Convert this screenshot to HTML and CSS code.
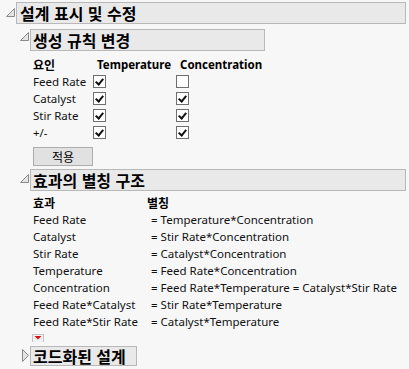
FILE: index.html
```html
<!DOCTYPE html>
<html lang="ko">
<head>
    <meta charset="UTF-8">
    <title>설계 표시 및 수정</title>
    <link rel="stylesheet" href="styles.css">
</head>
<body>
    <div class="outline">
        <div class="outline-head">
            <svg class="disclose" width="16" height="22" viewBox="0 0 16 22"><polygon points="6.5,16.5 14.5,16.5 14.5,8.5" fill="#e4e4e4" stroke="#8a8a8a"/></svg>
            <div class="title-box title-main">설계 표시 및 수정</div>
        </div>
        <div class="outline-body">
            <div class="outline">
                <div class="outline-head">
                    <svg class="disclose" width="16" height="22" viewBox="0 0 16 22"><polygon points="6.5,16.5 14.5,16.5 14.5,8.5" fill="#e4e4e4" stroke="#8a8a8a"/></svg>
                    <div class="title-box title-gen">생성 규칙 변경</div>
                </div>
                <div class="sub-body">
                    <div class="gen-table">
                        <div class="th">요인</div>
                        <div class="th th-check">Temperature</div>
                        <div class="th th-check">Concentration</div>

                        <div class="td">Feed Rate</div>
                        <div class="td"><span class="check on"></span></div>
                        <div class="td"><span class="check"></span></div>

                        <div class="td">Catalyst</div>
                        <div class="td"><span class="check on"></span></div>
                        <div class="td"><span class="check on"></span></div>

                        <div class="td">Stir Rate</div>
                        <div class="td"><span class="check on"></span></div>
                        <div class="td"><span class="check on"></span></div>

                        <div class="td">+/-</div>
                        <div class="td"><span class="check on"></span></div>
                        <div class="td"><span class="check on"></span></div>
                    </div>
                    <button class="apply">적용</button>
                </div>
            </div>

            <div class="outline">
                <div class="outline-head">
                    <svg class="disclose" width="16" height="22" viewBox="0 0 16 22"><polygon points="6.5,16.5 14.5,16.5 14.5,8.5" fill="#e4e4e4" stroke="#8a8a8a"/></svg>
                    <div class="title-box title-alias">효과의 별칭 구조</div>
                </div>
                <div class="sub-body">
                    <div class="alias-table">
                        <div class="th">효과</div>
                        <div class="th">별칭</div>
                        <div class="td">Feed Rate</div>
                        <div class="td alias">= Temperature*Concentration</div>
                        <div class="td">Catalyst</div>
                        <div class="td alias">= Stir Rate*Concentration</div>
                        <div class="td">Stir Rate</div>
                        <div class="td alias">= Catalyst*Concentration</div>
                        <div class="td">Temperature</div>
                        <div class="td alias">= Feed Rate*Concentration</div>
                        <div class="td">Concentration</div>
                        <div class="td alias">= Feed Rate*Temperature = Catalyst*Stir Rate</div>
                        <div class="td">Feed Rate*Catalyst</div>
                        <div class="td alias">= Stir Rate*Temperature</div>
                        <div class="td">Feed Rate*Stir Rate</div>
                        <div class="td alias">= Catalyst*Temperature</div>
                    </div>
                </div>
            </div>

            <div class="red-menu">
                <svg width="12" height="8" viewBox="0 0 12 8"><polygon points="2.5,2 9.5,2 6,5.5" fill="#d61010"/></svg>
            </div>

            <div class="outline">
                <div class="outline-head">
                    <svg class="disclose" width="16" height="20" viewBox="0 0 16 20"><polygon points="8.5,3.5 14.5,9.5 8.5,15.5" fill="#e4e4e4" stroke="#8a8a8a"/></svg>
                    <div class="title-box title-coded">코드화된 설계</div>
                </div>
            </div>
        </div>
    </div>
</body>
</html>
```

FILE: styles.css
```css
body {
    margin: 0;
    background-color: #f7f7f7;
    color: #111;
    font-family: "Noto Sans", "Noto Sans CJK KR", sans-serif;
    font-size: 11.5px;
    width: 409px;
    height: 369px;
    overflow: hidden;
}
.outline-head {
    display: flex;
    align-items: flex-start;
}
.disclose {
    flex: none;
    display: block;
}
.title-box {
    box-sizing: border-box;
    height: 22px;
    line-height: 20px;
    background-color: #e9e9e9;
    border: 1px solid #b8b8b8;
    padding-left: 3px;
    font-family: "Noto Sans CJK KR", sans-serif;
    font-size: 16px;
    font-weight: 700;
    color: #000;
    white-space: nowrap;
}
.title-main {
    margin-top: 2px;
    flex: 1;
    margin-right: 3px;
}
.outline-body {
    margin-left: 14px;
}
.title-gen {
    margin-top: 5px;
    width: 235px;
    padding-left: 2px;
}
.title-alias {
    flex: 1;
    margin-right: 3px;
    padding-left: 2px;
}
.title-coded {
    width: 107px;
    height: 20px;
    line-height: 18px;
    padding-left: 2px;
}
.sub-body {
    margin-left: 19px;
}
.th {
    font-family: "Noto Sans CJK KR", sans-serif;
    font-weight: 700;
    font-size: 12px;
    color: #000;
    height: 17px;
    line-height: 17px;
}
.td {
    height: 17px;
    line-height: 17px;
    display: flex;
    align-items: center;
    white-space: nowrap;
}
.gen-table {
    margin-top: 5px;
    display: grid;
    grid-template-columns: 60px 83px 1fr;
}
.th-check {
    padding-left: 4px;
    font-family: "Noto Sans", sans-serif;
    font-size: 11.5px;
}
.check {
    box-sizing: border-box;
    width: 13px;
    height: 13px;
    background-color: #fff;
    border: 1px solid #6f6f6f;
    position: relative;
}
.check.on::after {
    content: "";
    position: absolute;
    left: 3px;
    top: 1px;
    width: 3px;
    height: 6px;
    border-right: 2px solid #111;
    border-bottom: 2px solid #111;
    transform: rotate(40deg);
}
.apply {
    display: block;
    margin-top: 6px;
    width: 60px;
    height: 19px;
    padding: 0;
    background-color: #e1e1e1;
    border: 1px solid #adadad;
    font-family: "Noto Sans CJK KR", sans-serif;
    font-size: 12px;
    color: #000;
    line-height: 16px;
}
.outline + .outline .title-alias {
    margin-top: 3px;
}
.alias-table {
    margin-top: 3px;
    display: grid;
    grid-template-columns: 114px 1fr;
}
.alias {
    padding-left: 4px;
}
.red-menu {
    box-sizing: border-box;
    margin: 4px 0 0 18px;
    width: 12px;
    height: 8px;
    background-color: #f0f0f0;
    border: 1px solid #c4c4c4;
    border-bottom: none;
}
.red-menu svg {
    display: block;
    margin: -1px 0 0 -1px;
}
.red-menu + .outline {
    margin-top: 4px;
}
```
